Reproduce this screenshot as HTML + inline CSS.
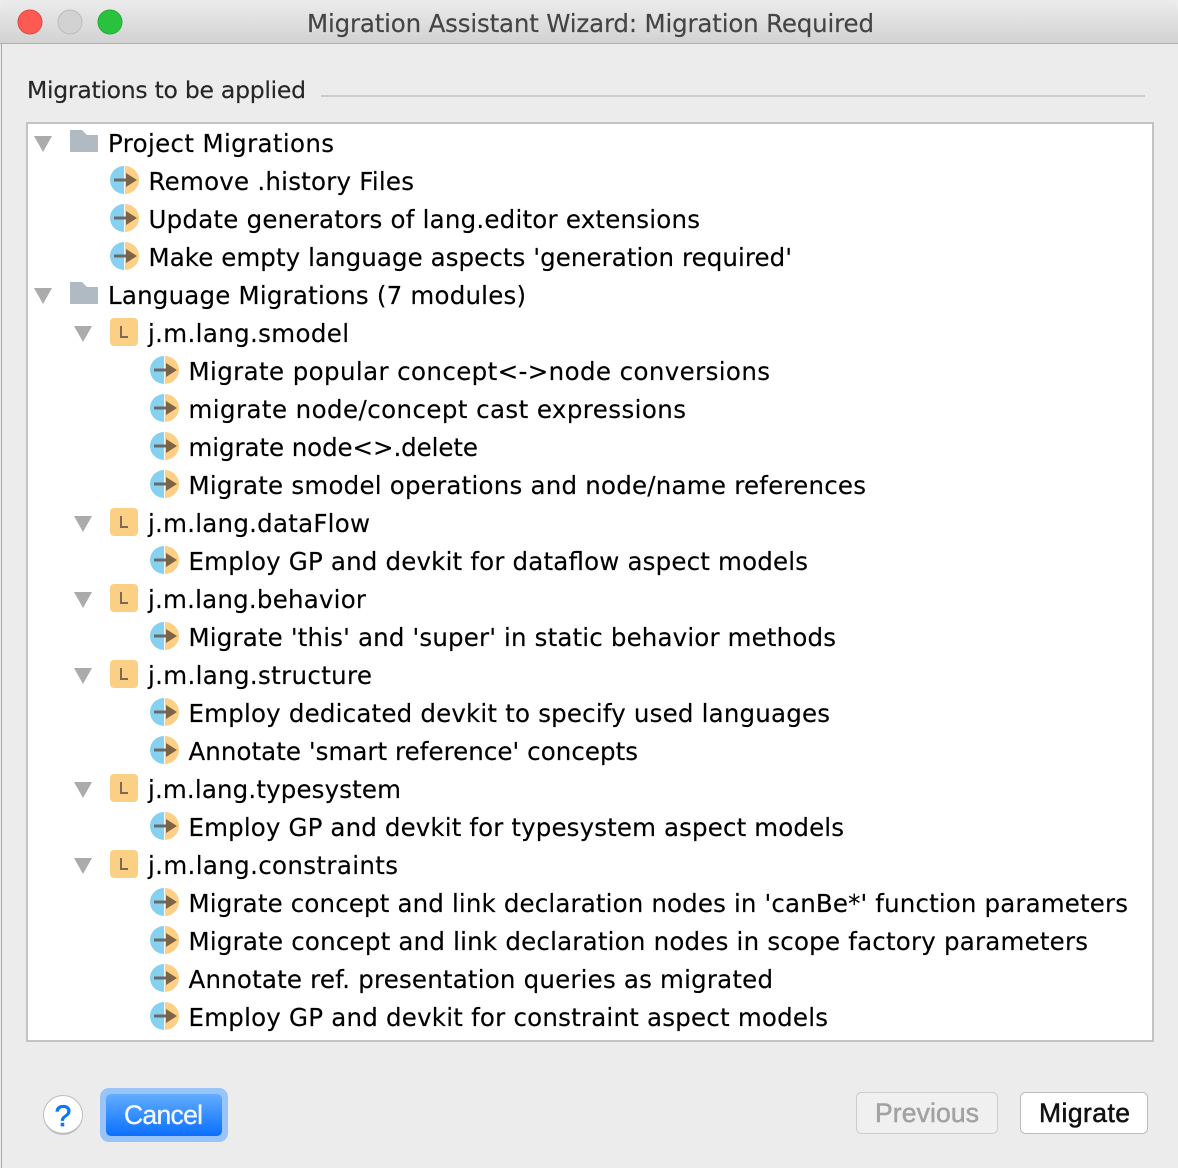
<!DOCTYPE html>
<html><head><meta charset="utf-8"><title>Migration Assistant Wizard</title>
<style>
html,body{margin:0;padding:0;width:1178px;height:1168px;overflow:hidden;background:#fff}
svg{display:block}
.t{font-family:"DejaVu Sans","Liberation Sans",sans-serif;font-size:24.5px;fill:#000;stroke:#000;stroke-width:.15px}
.h{font-family:"Liberation Sans",sans-serif;font-size:26.5px}
</style></head><body>
<svg width="1178" height="1168" viewBox="0 0 1178 1168" xmlns="http://www.w3.org/2000/svg">
<defs>
<linearGradient id="tb" x1="0" y1="0" x2="0" y2="1"><stop offset="0" stop-color="#ececec"/><stop offset="1" stop-color="#d2d2d2"/></linearGradient>
<linearGradient id="bl" x1="0" y1="0" x2="0" y2="1"><stop offset="0" stop-color="#62adff"/><stop offset="1" stop-color="#0a6fff"/></linearGradient>
<symbol id="mig" overflow="visible">
<path d="M124 166A14 14 0 0 0 124 194Z" fill="#86d0f0"/>
<path d="M125 166A14 14 0 0 1 125 194Z" fill="#fdd086"/>
<rect x="114" y="178.500" width="13" height="3" fill="#6c6a68"/>
<path d="M126 173L137 180L126 187Z" fill="#7d6444"/>
</symbol>
<symbol id="fold" overflow="visible"><path d="M70 130H82L87 135H98V152H70Z" fill="#afbac3"/></symbol>
<symbol id="tri" overflow="visible"><path d="M34 136H52L43 152Z" fill="#ababab"/></symbol>
<symbol id="lang" overflow="visible">
<rect x="110" y="318" width="28" height="28" rx="4" fill="#fbd085"/>
<path d="M121 326V337H128" fill="none" stroke="#7d6a50" stroke-width="2"/>
</symbol>
</defs>

<!-- window -->
<rect width="1178" height="1168" fill="#ececec"/>
<path d="M0 43V12Q0 0 12 0H1166Q1178 0 1178 12V43Z" fill="url(#tb)"/>
<rect x="0" y="43" width="1178" height="1" fill="#b0b0b0"/>
<rect x="1" y="44" width="1" height="1124" fill="#a8a8a8"/>
<circle cx="30" cy="22" r="12" fill="#fc5a53" stroke="#e2463f"/>
<circle cx="70" cy="22" r="12" fill="#d2d2d2" stroke="#bcbcbc"/>
<circle cx="110" cy="22" r="12" fill="#2ac13f" stroke="#22ac38"/>
<text class="t" x="307" y="32" textLength="567" lengthAdjust="spacing" style="fill:#444;stroke:#444">Migration Assistant Wizard: Migration Required</text>

<text class="t" x="27" y="98" textLength="279" lengthAdjust="spacing" style="fill:#262626;stroke:#262626;font-size:23.5px">Migrations to be applied</text>
<rect x="321" y="95" width="824" height="2" fill="#cbcbcb"/>

<!-- tree -->
<rect x="27" y="123" width="1126" height="918" fill="#fff" stroke="#c3c3c3" stroke-width="2"/>

<use href="#tri"/><use href="#fold"/>
<text class="t" x="108" y="152" textLength="226" lengthAdjust="spacing">Project Migrations</text>
<use href="#mig"/><text class="t" x="148.500" y="190" textLength="265.500" lengthAdjust="spacing">Remove .history Files</text>
<use href="#mig" y="38"/><text class="t" x="148.500" y="228" textLength="551.500" lengthAdjust="spacing">Update generators of lang.editor extensions</text>
<use href="#mig" y="76"/><text class="t" x="148.500" y="266" textLength="643.500" lengthAdjust="spacing">Make empty language aspects 'generation required'</text>

<use href="#tri" y="152"/><use href="#fold" y="152"/>
<text class="t" x="108" y="304" textLength="418" lengthAdjust="spacing">Language Migrations (7 modules)</text>

<use href="#tri" x="40" y="190"/><use href="#lang"/>
<text class="t" x="148" y="342" textLength="201" lengthAdjust="spacing">j.m.lang.smodel</text>
<use href="#mig" x="40" y="190"/><text class="t" x="188.500" y="380" textLength="581.500" lengthAdjust="spacing">Migrate popular concept&lt;-&gt;node conversions</text>
<use href="#mig" x="40" y="228"/><text class="t" x="188.500" y="418" textLength="497.500" lengthAdjust="spacing">migrate node/concept cast expressions</text>
<use href="#mig" x="40" y="266"/><text class="t" x="188.500" y="456" textLength="289.500" lengthAdjust="spacing">migrate node&lt;&gt;.delete</text>
<use href="#mig" x="40" y="304"/><text class="t" x="188.500" y="494" textLength="677.500" lengthAdjust="spacing">Migrate smodel operations and node/name references</text>

<use href="#tri" x="40" y="380"/><use href="#lang" y="190"/>
<text class="t" x="148" y="532" textLength="222" lengthAdjust="spacing">j.m.lang.dataFlow</text>
<use href="#mig" x="40" y="380"/><text class="t" x="188.500" y="570" textLength="619.500" lengthAdjust="spacing">Employ GP and devkit for dataflow aspect models</text>

<use href="#tri" x="40" y="456"/><use href="#lang" y="266"/>
<text class="t" x="148" y="608" textLength="218" lengthAdjust="spacing">j.m.lang.behavior</text>
<use href="#mig" x="40" y="456"/><text class="t" x="188.500" y="646" textLength="647.500" lengthAdjust="spacing">Migrate 'this' and 'super' in static behavior methods</text>

<use href="#tri" x="40" y="532"/><use href="#lang" y="342"/>
<text class="t" x="148" y="684" textLength="224" lengthAdjust="spacing">j.m.lang.structure</text>
<use href="#mig" x="40" y="532"/><text class="t" x="188.500" y="722" textLength="641.500" lengthAdjust="spacing">Employ dedicated devkit to specify used languages</text>
<use href="#mig" x="40" y="570"/><text class="t" x="188.500" y="760" textLength="449.500" lengthAdjust="spacing">Annotate 'smart reference' concepts</text>

<use href="#tri" x="40" y="646"/><use href="#lang" y="456"/>
<text class="t" x="148" y="798" textLength="253" lengthAdjust="spacing">j.m.lang.typesystem</text>
<use href="#mig" x="40" y="646"/><text class="t" x="188.500" y="836" textLength="655.500" lengthAdjust="spacing">Employ GP and devkit for typesystem aspect models</text>

<use href="#tri" x="40" y="722"/><use href="#lang" y="532"/>
<text class="t" x="148" y="874" textLength="250" lengthAdjust="spacing">j.m.lang.constraints</text>
<use href="#mig" x="40" y="722"/><text class="t" x="188.500" y="912" textLength="939.500" lengthAdjust="spacing">Migrate concept and link declaration nodes in 'canBe*' function parameters</text>
<use href="#mig" x="40" y="760"/><text class="t" x="188.500" y="950" textLength="899.500" lengthAdjust="spacing">Migrate concept and link declaration nodes in scope factory parameters</text>
<use href="#mig" x="40" y="798"/><text class="t" x="188.500" y="988" textLength="584.500" lengthAdjust="spacing">Annotate ref. presentation queries as migrated</text>
<use href="#mig" x="40" y="836"/><text class="t" x="188.500" y="1026" textLength="639.500" lengthAdjust="spacing">Employ GP and devkit for constraint aspect models</text>

<!-- buttons -->
<circle cx="63" cy="1115" r="19.500" fill="#fff" stroke="#bdbdbd"/>
<path d="M44 1119A19.500 19.500 0 0 0 82 1119A20 20 0 0 1 44 1119Z" fill="#bdbdbd"/>
<text class="h" x="63" y="1126" text-anchor="middle" style="fill:#0a78fa;stroke:#0a78fa;stroke-width:.7px;font-size:30px">?</text>

<rect x="100" y="1088" width="128" height="54" rx="9" fill="#99c4f8"/>
<rect x="106" y="1094" width="116" height="42" rx="5" fill="url(#bl)"/>
<text class="h" x="124" y="1124" textLength="79" lengthAdjust="spacing" style="fill:#f4f8ff;stroke:#f4f8ff;stroke-width:.3px">Cancel</text>

<rect x="856.500" y="1092.500" width="141" height="41" rx="5" fill="#f0f0f0" stroke="#cdcdcd"/>
<text class="h" x="875" y="1122" textLength="104" lengthAdjust="spacing" style="fill:#a2a2a2;stroke:#a2a2a2;stroke-width:.5px">Previous</text>

<rect x="1020.500" y="1092.500" width="127" height="41" rx="5" fill="#fff" stroke="#bcbcbc"/>
<text class="h" x="1039" y="1122" textLength="91" lengthAdjust="spacing" style="fill:#111;stroke:#111;stroke-width:.5px">Migrate</text>
</svg>
</body></html>
